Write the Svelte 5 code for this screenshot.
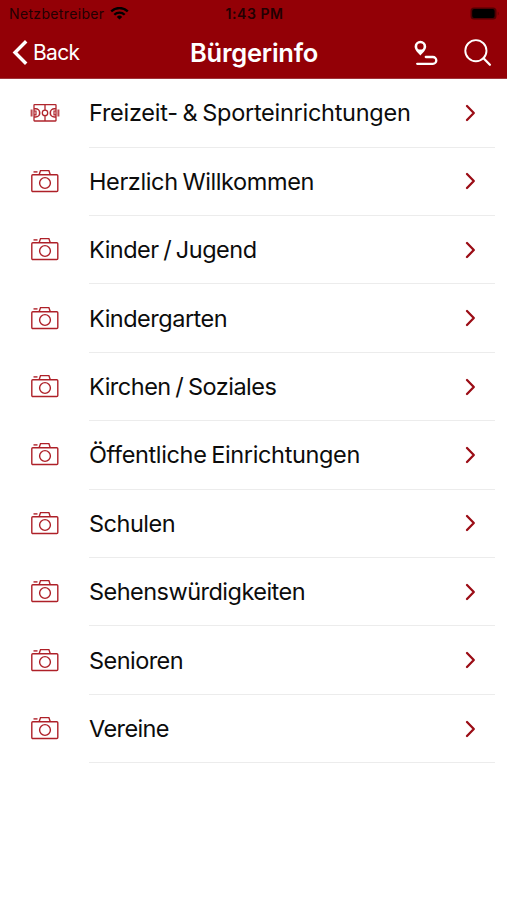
<script lang="ts">
	type Entry = { label: string; icon: 'pitch' | 'camera'; tracking: number };

	const entries: Entry[] = [
		{ label: 'Freizeit- & Sporteinrichtungen', icon: 'pitch', tracking: -0.27 },
		{ label: 'Herzlich Willkommen', icon: 'camera', tracking: -0.38 },
		{ label: 'Kinder / Jugend', icon: 'camera', tracking: -0.5 },
		{ label: 'Kindergarten', icon: 'camera', tracking: -0.5 },
		{ label: 'Kirchen / Soziales', icon: 'camera', tracking: -0.5 },
		{ label: 'Öffentliche Einrichtungen', icon: 'camera', tracking: -0.36 },
		{ label: 'Schulen', icon: 'camera', tracking: -0.5 },
		{ label: 'Sehenswürdigkeiten', icon: 'camera', tracking: -0.53 },
		{ label: 'Senioren', icon: 'camera', tracking: -0.55 },
		{ label: 'Vereine', icon: 'camera', tracking: -0.6 }
	];
</script>

<div class="screen">
	<header>
		<div class="status">
			<div class="carrier">
				<span>Netzbetreiber</span>
				<svg width="19" height="14" viewBox="0 0 19 14" fill="none" stroke="#000" stroke-width="2.3">
					<path d="M1.2 4.4a11.8 11.8 0 0 1 16.6 0" />
					<path d="M4.3 7.7a7.4 7.4 0 0 1 10.4 0" />
					<path d="M9.5 12.6 6.8 9.9a3.9 3.9 0 0 1 5.4 0z" fill="#000" stroke="none" />
				</svg>
			</div>
			<span class="time">1:43 PM</span>
			<svg class="battery" width="30" height="14" viewBox="0 0 30 14">
				<rect x="0.5" y="0.5" width="26" height="12" rx="3.5" fill="#500003" />
				<rect x="2.2" y="2.1" width="22.4" height="8.8" rx="2" fill="#000" />
				<path d="M27.6 4.5v4q1.4-.6 1.4-2t-1.4-2z" fill="#700005" />
			</svg>
		</div>
		<div class="nav">
			<button class="back">
				<svg width="16" height="26" viewBox="0 0 16 26" fill="none" stroke="#fff" stroke-width="3.4">
					<path d="M14.2 1.2 3 12.5l11.2 11.3" />
				</svg>
				<span>Back</span>
			</button>
			<h1>Bürgerinfo</h1>
			<div class="actions">
				<button aria-label="Route">
					<svg width="24" height="26" viewBox="0 0 24 26" fill="none" stroke="#fff" stroke-width="2.3">
						<path
							d="M6.4.7A5.8 5.8 0 0 0 .6 6.5c0 3.5 3.6 6.6 5.8 9 2.2-2.4 5.8-5.5 5.8-9A5.8 5.8 0 0 0 6.4.7zm0 2.5a3.2 3.2 0 1 1 0 6.4 3.2 3.2 0 0 1 0-6.4z"
							fill="#fff"
							fill-rule="evenodd"
							stroke="none"
						/>
						<path d="M11.8 17h7.1a3.4 3.4 0 0 1 0 6.8H3.2" stroke-linecap="round" />
					</svg>
				</button>
				<button aria-label="Suche">
					<svg width="28" height="28" viewBox="0 0 28 28" fill="none" stroke="#fff" stroke-width="1.9">
						<circle cx="11.9" cy="11.7" r="10.6" />
						<path d="m19.5 19.3 6.4 6.4" stroke-width="2.3" stroke-linecap="round" />
					</svg>
				</button>
			</div>
		</div>
	</header>

	<ul>
		{#each entries as entry}
			<li>
				<div class="icon">
					{#if entry.icon === 'pitch'}
						<svg width="30" height="20" viewBox="0 0 30 20" fill="none" stroke="#b0252d" stroke-width="1.3">
							<rect x="4" y="1.7" width="22" height="16.3" rx="0.5" />
							<path d="M15 1.7v5.4M15 12.7v5.3" />
							<circle cx="15" cy="9.9" r="2.7" />
							<path d="M4 5.8h1.6a4.1 4.1 0 0 1 0 8.2H4M26 5.8h-1.6a4.1 4.1 0 0 0 0 8.2H26" stroke-width="1.6" />
							<path d="M4 8h2v3.8H4M26 8h-2v3.8h2" stroke-width="1.2" />
							<path d="M1.6 6.4v7M28.4 6.4v7" stroke-width="2" stroke="#bc4a50" />
						</svg>
					{:else}
						<svg width="30" height="26" viewBox="0 0 30 26" fill="none" stroke="#ae2028" stroke-width="1.4">
							<rect x="1.8" y="5.7" width="26" height="16.8" rx="1" />
							<path d="M9.2 5.5 10.5 1.6h8.4l1.3 3.9" />
							<circle cx="15" cy="14" r="5.4" />
							<path d="M3.5 2.9h4" />
						</svg>
					{/if}
				</div>
				<div class="row">
					<span class="label" style="letter-spacing: {entry.tracking}px">{entry.label}</span>
					<svg width="12" height="18" viewBox="0 0 12 18" fill="none" stroke="#9b0d16" stroke-width="2.3">
						<path d="m3 2 6.8 7L3 16" stroke-linecap="round" stroke-linejoin="round" />
					</svg>
				</div>
			</li>
		{/each}
	</ul>
</div>

<style>
	:global(body) {
		margin: 0;
		background: #fff;
	}

	.screen {
		width: 507px;
		height: 900px;
		overflow: hidden;
		background: #fff;
		font-family: Inter, 'Liberation Sans', sans-serif;
		color: #0c0c0c;
	}

	header {
		height: 79px;
		box-sizing: border-box;
		background: #930006;
		border-bottom: 1px solid #a0343a;
	}

	.status {
		display: grid;
		grid-template-columns: 1fr auto 1fr;
		align-items: center;
		height: 27px;
		padding: 0 7px 0 9px;
		font-size: 14px;
		color: #220002;
	}

	.carrier {
		display: flex;
		align-items: center;
		gap: 6px;
		letter-spacing: 0.35px;
	}

	.time {
		font-size: 14px;
		font-weight: 600;
		letter-spacing: 0.55px;
	}

	.battery {
		justify-self: end;
	}

	.nav {
		display: grid;
		grid-template-columns: 1fr auto 1fr;
		align-items: center;
		height: 51px;
		padding: 0 15px 0 12px;
		color: #fff;
	}

	button {
		display: flex;
		padding: 0;
		border: none;
		background: none;
		color: inherit;
		font: inherit;
	}

	.back {
		align-items: center;
		gap: 5px;
		font-size: 21px;
		letter-spacing: -0.7px;
	}

	h1 {
		margin: 0;
		padding-left: 4px;
		font-size: 25.5px;
		font-weight: 600;
		letter-spacing: -0.25px;
	}

	.actions {
		display: flex;
		justify-content: flex-end;
		align-items: center;
		gap: 26px;
	}

	ul {
		margin: 0;
		padding: 0.3px 0 0;
		list-style: none;
	}

	li {
		display: flex;
		height: 68.4px;
	}

	.icon {
		display: flex;
		flex: none;
		align-items: center;
		justify-content: center;
		width: 89px;
	}

	.row {
		display: flex;
		flex: 1;
		align-items: center;
		justify-content: space-between;
		box-sizing: border-box;
		margin-right: 12px;
		padding-right: 19px;
		border-bottom: 1px solid #ececec;
	}

	.label {
		font-size: 23.5px;
		word-spacing: -1.5px;
		white-space: nowrap;
	}
</style>
